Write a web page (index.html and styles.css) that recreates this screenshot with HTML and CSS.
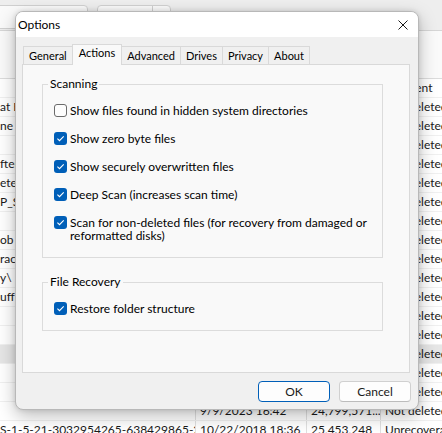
FILE: index.html
```html
<!DOCTYPE html>
<html lang="en">
<head>
<meta charset="utf-8">
<title>Options</title>
<link rel="stylesheet" href="styles.css">
</head>
<body>
<div class="app">
  <div class="toolbar">
    <div class="tb-box tb-left"></div>
    <div class="tb-box tb-split"><span class="tb-divider"></span></div>
  </div>
  <div class="info"></div>
  <div class="list">
    <div class="row"><span class="cell c1"></span><span class="cell c2"></span><span class="cell c3"></span><span class="cell c4">Excellent</span></div>
    <div class="row"><span class="cell c1">at Bl</span><span class="cell c2"></span><span class="cell c3"></span><span class="cell c4">Not deleted</span></div>
    <div class="row"><span class="cell c1">ne I</span><span class="cell c2"></span><span class="cell c3"></span><span class="cell c4">Not deleted</span></div>
    <div class="row"><span class="cell c1"></span><span class="cell c2"></span><span class="cell c3"></span><span class="cell c4">Not deleted</span></div>
    <div class="row"><span class="cell c1">fter</span><span class="cell c2"></span><span class="cell c3"></span><span class="cell c4">Not deleted</span></div>
    <div class="row"><span class="cell c1">ete</span><span class="cell c2"></span><span class="cell c3"></span><span class="cell c4">Not deleted</span></div>
    <div class="row"><span class="cell c1">P_S</span><span class="cell c2"></span><span class="cell c3"></span><span class="cell c4">Not deleted</span></div>
    <div class="row"><span class="cell c1"></span><span class="cell c2"></span><span class="cell c3"></span><span class="cell c4">Not deleted</span></div>
    <div class="row"><span class="cell c1">ob</span><span class="cell c2"></span><span class="cell c3"></span><span class="cell c4">Not deleted</span></div>
    <div class="row"><span class="cell c1">rac</span><span class="cell c2"></span><span class="cell c3"></span><span class="cell c4">Not deleted</span></div>
    <div class="row"><span class="cell c1">y\</span><span class="cell c2"></span><span class="cell c3"></span><span class="cell c4">Not deleted</span></div>
    <div class="row"><span class="cell c1">uff</span><span class="cell c2"></span><span class="cell c3"></span><span class="cell c4">Not deleted</span></div>
    <div class="row"><span class="cell c1"></span><span class="cell c2"></span><span class="cell c3"></span><span class="cell c4">Not deleted</span></div>
    <div class="row"><span class="cell c1"></span><span class="cell c2"></span><span class="cell c3"></span><span class="cell c4">Not deleted</span></div>
    <div class="row selected"><span class="cell c1"></span><span class="cell c2"></span><span class="cell c3"></span><span class="cell c4">Not deleted</span></div>
    <div class="row"><span class="cell c1"></span><span class="cell c2"></span><span class="cell c3"></span><span class="cell c4">Not deleted</span></div>
    <div class="row"><span class="cell c1"></span><span class="cell c2"></span><span class="cell c3"></span><span class="cell c4">Not deleted</span></div>
    <div class="row"><span class="cell c1"></span><span class="cell c2">9/9/2023 16:42</span><span class="cell c3">24,799,571...</span><span class="cell c4">Not deleted</span></div>
    <div class="row"><span class="cell c1">S-1-5-21-3032954265-638429865-2</span><span class="cell c2">10/22/2018 18:36</span><span class="cell c3">25,453,248</span><span class="cell c4">Unrecoverable</span></div>
  </div>
</div>

<div class="dialog" role="dialog" aria-label="Options">
  <div class="titlebar">
    <span class="title">Options</span>
    <svg class="close" width="10" height="10" viewBox="0 0 10 10" aria-hidden="true"><path d="M0.5 0.5 L9.5 9.5 M9.5 0.5 L0.5 9.5" stroke="#1a1a1a" stroke-width="1" fill="none"/></svg>
  </div>
  <div class="dlg-body">
    <div class="tabs">
      <span class="tab">General</span>
      <span class="tab active">Actions</span>
      <span class="tab">Advanced</span>
      <span class="tab">Drives</span>
      <span class="tab">Privacy</span>
      <span class="tab">About</span>
    </div>
    <div class="panel">
      <fieldset class="group">
        <legend>Scanning</legend>
        <div class="rows">
          <label class="check"><span class="box off"></span><span class="lbl">Show files found in hidden system directories</span></label>
          <label class="check"><span class="box"><svg width="13" height="13" viewBox="0 0 13 13"><path d="M3.4 6.7 L5.5 8.7 L9.7 4.4" stroke="#fff" stroke-width="1.1" fill="none"/></svg></span><span class="lbl">Show zero byte files</span></label>
          <label class="check"><span class="box"><svg width="13" height="13" viewBox="0 0 13 13"><path d="M3.4 6.7 L5.5 8.7 L9.7 4.4" stroke="#fff" stroke-width="1.1" fill="none"/></svg></span><span class="lbl">Show securely overwritten files</span></label>
          <label class="check"><span class="box"><svg width="13" height="13" viewBox="0 0 13 13"><path d="M3.4 6.7 L5.5 8.7 L9.7 4.4" stroke="#fff" stroke-width="1.1" fill="none"/></svg></span><span class="lbl">Deep Scan (increases scan time)</span></label>
          <label class="check"><span class="box"><svg width="13" height="13" viewBox="0 0 13 13"><path d="M3.4 6.7 L5.5 8.7 L9.7 4.4" stroke="#fff" stroke-width="1.1" fill="none"/></svg></span><span class="lbl">Scan for non-deleted files (for recovery from damaged or<br>reformatted disks)</span></label>
        </div>
      </fieldset>
      <fieldset class="group recovery">
        <legend>File Recovery</legend>
        <div class="rows">
          <label class="check"><span class="box"><svg width="13" height="13" viewBox="0 0 13 13"><path d="M3.4 6.7 L5.5 8.7 L9.7 4.4" stroke="#fff" stroke-width="1.1" fill="none"/></svg></span><span class="lbl">Restore folder structure</span></label>
        </div>
      </fieldset>
    </div>
    <div class="buttons">
      <button class="btn default">OK</button>
      <button class="btn">Cancel</button>
    </div>
  </div>
</div>
</body>
</html>
```
FILE: styles.css
```css
* { box-sizing: border-box; }
html, body { margin: 0; padding: 0; }
body {
  width: 442px;
  height: 433px;
  overflow: hidden;
  position: relative;
  background: #f7f7f7;
  font-family: Lato, "Liberation Sans", sans-serif;
  font-size: 12px;
  color: #1a1a1a;
}

/* background application */
.toolbar {
  height: 31px;
  background: #eeeeee;
  border-bottom: 1px solid #d6d6d6;
  display: flex;
  align-items: flex-start;
  padding-top: 5px;
  gap: 9px;
}
.tb-box {
  height: 24px;
  background: #fafafa;
  border: 1px solid #d0d0d0;
  border-radius: 4px;
}
.tb-left { width: 92px; margin-left: -4px; }
.tb-split { width: 74px; display: flex; justify-content: flex-end; }
.tb-divider { width: 1px; background: #d0d0d0; margin-right: 17px; }
.info {
  height: 48px;
  background: #fafafa;
  border-bottom: 1px solid #dcdcdc;
}
.list { background: #fff; }
.row {
  display: grid;
  grid-template-columns: 195px 111px 74px 1fr;
  height: 19px;
  line-height: 18px;
  border-bottom: 1px solid #f0f0f0;
}
.row.selected { background: #e6e6e6; }
.cell {
  white-space: nowrap;
  overflow: hidden;
  padding: 0 4px;
  border-left: 1px solid #e0e0e0;
  color: #1a1a1a;
}
.c1 { border-left: none; padding-left: 0; }

/* dialog window */
.dialog {
  position: absolute;
  left: 15px;
  top: 11px;
  width: 404px;
  height: 399px;
  border: 1px solid #b8b8b8;
  border-radius: 8px;
  background: #f0f0f0;
  box-shadow: 0 6px 18px rgba(0, 0, 0, 0.26), 0 0 5px rgba(0, 0, 0, 0.12);
  overflow: hidden;
  display: flex;
  flex-direction: column;
  color: #000;
}
.titlebar {
  height: 25px;
  flex: none;
  background: #ffffff;
  display: flex;
  align-items: center;
  justify-content: space-between;
  padding: 0 10px 0 2px;
}
.close { display: block; }
.dlg-body {
  flex: 1;
  display: flex;
  flex-direction: column;
  padding: 7px 8px 7px 6px;
}
.tabs {
  height: 20px;
  flex: none;
  display: flex;
  align-items: flex-end;
  margin-left: 1px;
  position: relative;
  z-index: 1;
  font-size: 11px;
}
.tab {
  height: 18px;
  line-height: 17px;
  padding: 0 5px;
  border: 1px solid #d9d9d9;
  border-bottom: none;
  background: #f0f0f0;
  margin-left: -1px;
}
.tab:first-child { margin-left: 0; }
.tab.active {
  height: 21px;
  line-height: 16px;
  margin-bottom: -1px;
  padding: 0 6px;
  background: #f9f9f9;
}
.panel {
  height: 309px;
  flex: none;
  border: 1px solid #d9d9d9;
  background: #f9f9f9;
  padding: 12px 26px 0 19px;
}
.group {
  margin: 0;
  min-width: 0;
  border: 1px solid #dcdcdc;
  padding: 13px 10px 15px 11px;
}
.group legend {
  padding: 0 2px;
  margin-left: -6px;
  line-height: 14px;
}
.recovery { margin-top: 17px; }
.rows {
  display: flex;
  flex-direction: column;
  gap: 15px;
}
.check {
  display: flex;
  align-items: flex-start;
  gap: 3px;
  line-height: 13px;
}
.box {
  width: 13px;
  height: 13px;
  flex: none;
  border-radius: 3px;
  background: #005fb8;
  display: flex;
}
.box svg { display: block; }
.box.off {
  background: #fdfdfd;
  border: 1px solid #6b6b6b;
}
.buttons {
  display: flex;
  justify-content: flex-end;
  gap: 9px;
  margin-top: 8px;
  margin-right: -1px;
}
.btn {
  width: 72px;
  height: 21px;
  padding: 0;
  border: 1px solid #d0d0d0;
  border-bottom-color: #bcbcbc;
  border-radius: 4px;
  background: #fdfdfd;
  font: inherit;
  color: #1a1a1a;
}
.btn.default {
  border-color: #005fb8;
}
```
